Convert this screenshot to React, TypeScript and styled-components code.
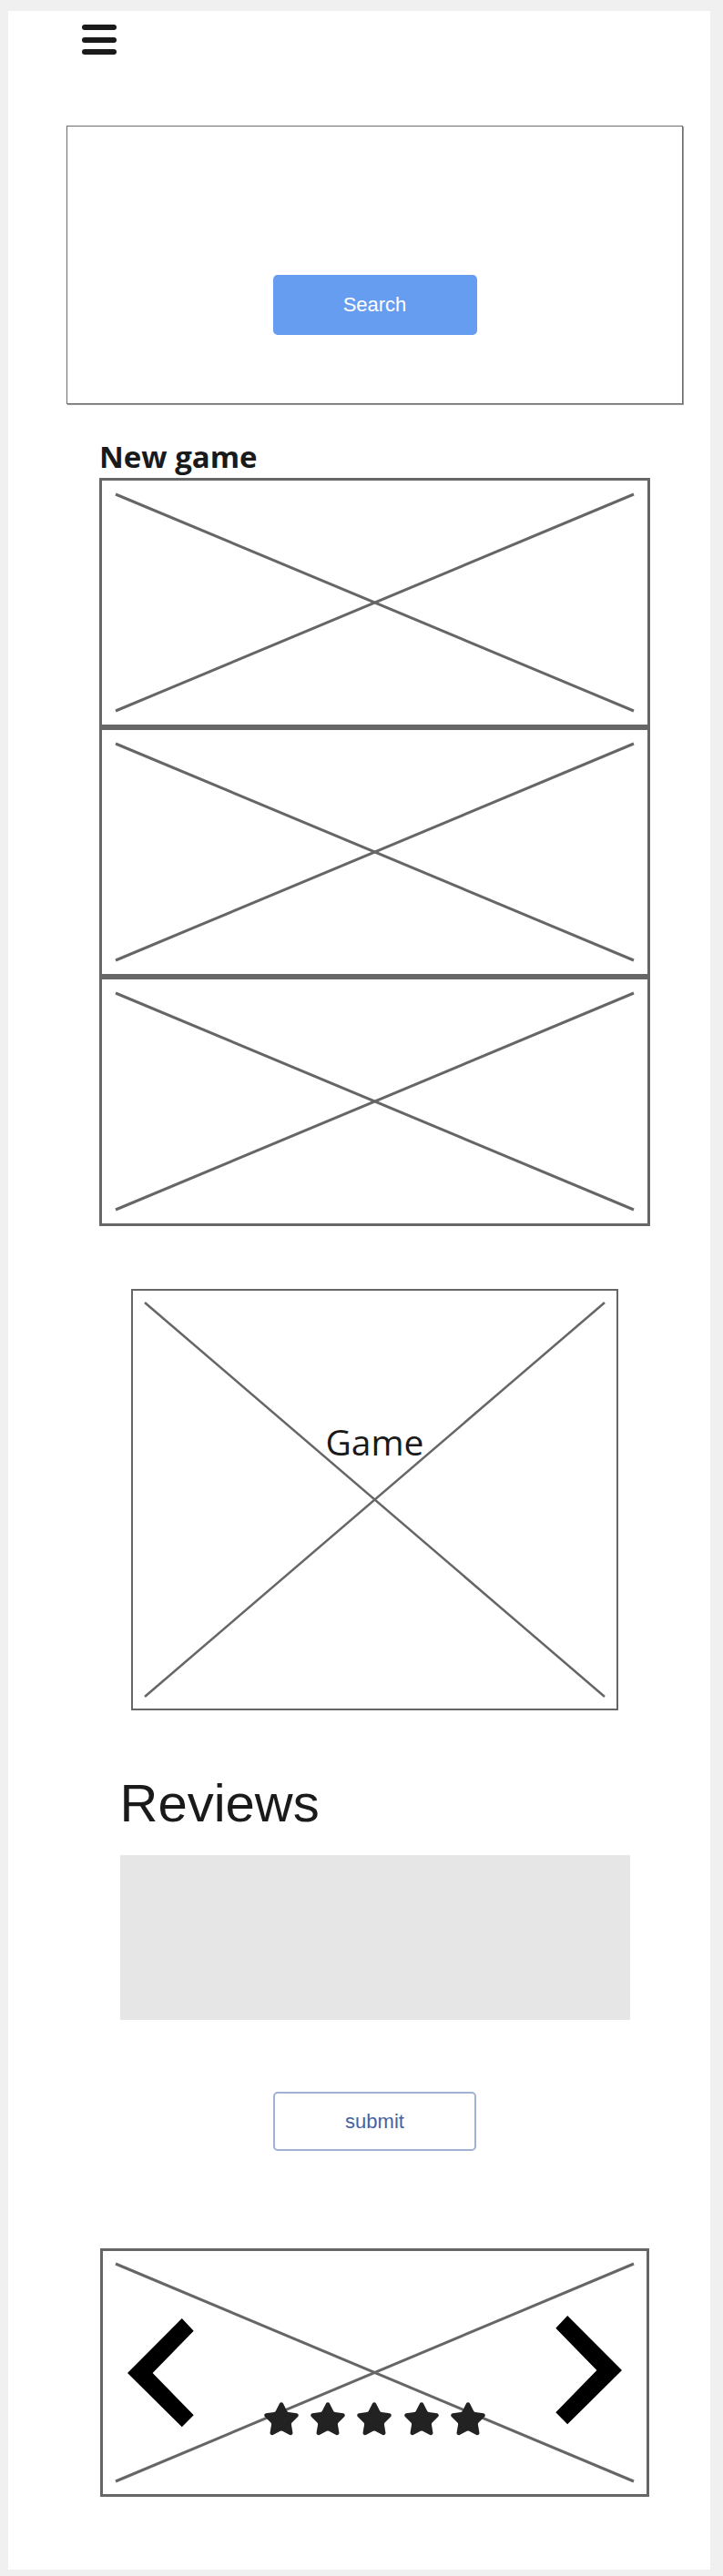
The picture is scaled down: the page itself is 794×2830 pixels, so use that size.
import React from 'react';
import styled, { createGlobalStyle } from 'styled-components';
import { Star } from 'lucide-react';

const GlobalStyle = createGlobalStyle`
  html, body {
    margin: 0;
    padding: 0;
    background: #f0f0f0;
  }
  body {
    font-family: 'Liberation Sans', Arial, sans-serif;
    color: #1a1a1a;
  }
  #root {
    padding: 12px 14px 7px 9px;
  }
`;

const Sheet = styled.div`
  background: #fff;
  width: 771px;
  height: 2811px;
  box-sizing: border-box;
  padding-left: 34px;
  display: flex;
  flex-direction: column;
  align-items: center;
`;

const Header = styled.header`
  align-self: stretch;
  padding: 15px 0 0 47px;
`;

const MenuIcon = styled.div`
  display: flex;
  flex-direction: column;
  gap: 7.5px;
  width: 38px;
`;

const MenuBar = styled.span`
  display: block;
  height: 6px;
  border-radius: 3px;
  background: #1a1a1a;
`;

const SearchPanel = styled.section`
  width: 677px;
  height: 306px;
  box-sizing: border-box;
  margin-top: 78px;
  padding-top: 163px;
  border: 1px solid #6e6e6e;
  box-shadow: 1px 1px 0 #9a9a9a;
  display: flex;
  justify-content: center;
  align-items: flex-start;
`;

const SearchButton = styled.button`
  width: 224px;
  height: 66px;
  border: none;
  border-radius: 5px;
  background: #669df0;
  color: #fff;
  font-family: 'Liberation Sans', Arial, sans-serif;
  font-size: 22px;
  cursor: pointer;
`;

const NewGameSection = styled.section`
  width: 605px;
  margin-top: 39px;
`;

const SectionTitle = styled.h2`
  margin: 0 0 4px;
  font-family: 'Open Sans', 'Noto Sans', sans-serif;
  font-weight: 700;
  font-size: 33px;
  line-height: 38px;
  color: #1a1a1a;
`;

const Frame = styled.div<{ $w: number; $h: number; $b: number; $mt?: number }>`
  position: relative;
  box-sizing: border-box;
  width: ${(p) => p.$w}px;
  height: ${(p) => p.$h}px;
  margin-top: ${(p) => p.$mt ?? 0}px;
  border: ${(p) => p.$b}px solid #666;
  background: #fff;
`;

const CrossSvg = styled.svg<{ $inset: number }>`
  position: absolute;
  top: ${(p) => p.$inset}px;
  left: ${(p) => p.$inset}px;
  width: calc(100% - ${(p) => p.$inset * 2}px);
  height: calc(100% - ${(p) => p.$inset * 2}px);
  overflow: visible;
`;

const Cross: React.FC<{ inset: number; stroke: number }> = ({ inset, stroke }) => (
  <CrossSvg $inset={inset}>
    <line x1="0" y1="0" x2="100%" y2="100%" stroke="#666" strokeWidth={stroke} />
    <line x1="0" y1="100%" x2="100%" y2="0" stroke="#666" strokeWidth={stroke} />
  </CrossSvg>
);

const GameLabel = styled.div`
  position: absolute;
  top: 142px;
  left: 0;
  right: 0;
  text-align: center;
  font-family: 'Open Sans', 'Noto Sans', sans-serif;
  font-weight: 400;
  font-size: 39px;
  line-height: 47px;
  color: #1a1a1a;
`;

const ReviewsSection = styled.section`
  width: 560px;
  margin-top: 69px;
`;

const ReviewsTitle = styled.h2`
  margin: 0;
  font-family: 'Liberation Sans', Arial, sans-serif;
  font-weight: 400;
  font-size: 58px;
  line-height: 65px;
  color: #1a1a1a;
`;

const ReviewBox = styled.div`
  margin-top: 25px;
  height: 181px;
  background: #e6e6e6;
`;

const SubmitButton = styled.button`
  margin-top: 79px;
  width: 223px;
  height: 65px;
  box-sizing: border-box;
  border: 2px solid #a0b1d3;
  border-radius: 5px;
  background: #fff;
  color: #45639f;
  font-family: 'Liberation Sans', Arial, sans-serif;
  font-size: 22px;
  cursor: pointer;
`;

const CarouselRow = styled.div`
  position: relative;
  height: 100%;
  box-sizing: border-box;
  padding: 0 27px 0 26.5px;
  display: flex;
  align-items: center;
  justify-content: space-between;
`;

const Arrow = styled.svg<{ $shift?: number }>`
  width: 73px;
  height: 120px;
  margin-top: ${(p) => p.$shift ?? 0}px;
  flex-shrink: 0;
`;

const StarRow = styled.div`
  display: flex;
  gap: 9.3px;
  margin-top: 102px;
  color: #222;
`;

const ChevronLeft = () => (
  <Arrow viewBox="0 0 73 120">
    <polygon points="59.8,0 0,60 59.8,119.3 72.7,106.3 27.6,60 72.7,13.7" fill="#000" />
  </Arrow>
);

const ChevronRight = () => (
  <Arrow viewBox="0 0 73 120" $shift={-6}>
    <polygon points="13.2,0 73,60 13.2,119.3 0.3,106.3 45.4,60 0.3,13.7" fill="#000" />
  </Arrow>
);

const App: React.FC = () => {
  const placeholders = [1, 2, 3];

  return (
    <>
      <GlobalStyle />
      <Sheet>
        <Header>
          <MenuIcon>
            <MenuBar />
            <MenuBar />
            <MenuBar />
          </MenuIcon>
        </Header>

        <SearchPanel>
          <SearchButton>Search</SearchButton>
        </SearchPanel>

        <NewGameSection>
          <SectionTitle>New game</SectionTitle>
          {placeholders.map((id) => (
            <Frame key={id} $w={605} $h={274} $b={3}>
              <Cross inset={15} stroke={3} />
            </Frame>
          ))}
        </NewGameSection>

        <Frame $w={535} $h={463} $b={2} $mt={69}>
          <Cross inset={13} stroke={2.5} />
          <GameLabel>Game</GameLabel>
        </Frame>

        <ReviewsSection>
          <ReviewsTitle>Reviews</ReviewsTitle>
          <ReviewBox />
        </ReviewsSection>

        <SubmitButton>submit</SubmitButton>

        <Frame $w={603} $h={273} $b={3} $mt={107}>
          <Cross inset={14} stroke={3} />
          <CarouselRow>
            <ChevronLeft />
            <StarRow>
              {[1, 2, 3, 4, 5].map((n) => (
                <Star key={n} size={42} fill="currentColor" strokeWidth={1.5} />
              ))}
            </StarRow>
            <ChevronRight />
          </CarouselRow>
        </Frame>
      </Sheet>
    </>
  );
};

export default App;
